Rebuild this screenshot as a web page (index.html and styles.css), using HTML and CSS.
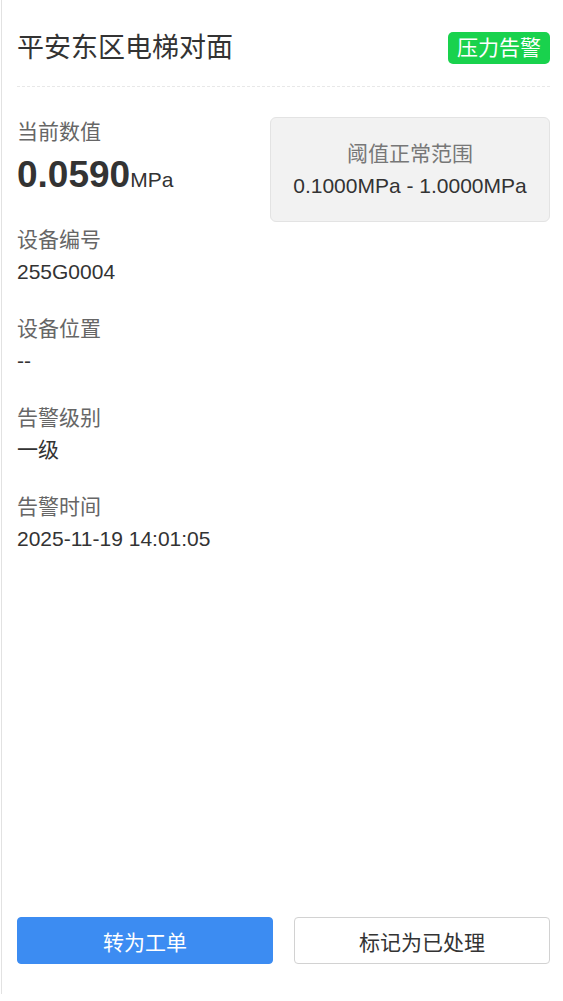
FILE: index.html
```html
<!DOCTYPE html>
<html lang="zh-CN">
<head>
<meta charset="utf-8">
<title>压力告警</title>
<link rel="stylesheet" href="styles.css">
</head>
<body>
<div class="panel">
  <div class="header">
    <h1 class="title">平安东区电梯对面</h1>
    <span class="badge">压力告警</span>
  </div>
  <div class="top-row">
    <div class="group">
      <div class="label">当前数值</div>
      <div class="big-value">0.0590<span class="unit">MPa</span></div>
    </div>
    <div class="range-box">
      <div class="range-label">阈值正常范围</div>
      <div class="range-value">0.1000MPa - 1.0000MPa</div>
    </div>
  </div>
  <div class="info-list">
    <div class="group">
      <div class="label">设备编号</div>
      <div class="value">255G0004</div>
    </div>
    <div class="group">
      <div class="label">设备位置</div>
      <div class="value">--</div>
    </div>
    <div class="group">
      <div class="label">告警级别</div>
      <div class="value">一级</div>
    </div>
    <div class="group">
      <div class="label">告警时间</div>
      <div class="value">2025-11-19 14:01:05</div>
    </div>
  </div>
  <div class="footer">
    <button class="btn btn-primary">转为工单</button>
    <button class="btn btn-default">标记为已处理</button>
  </div>
</div>
</body>
</html>
```

FILE: styles.css
```css
* { box-sizing: border-box; }
html, body {
  margin: 0;
  padding: 0;
  background: #fff;
}
body {
  font-family: "Liberation Sans", "Noto Sans CJK SC", sans-serif;
  color: #333;
  font-size: 21px;
  line-height: 1.5;
}
.panel {
  margin-left: 1px;
  border-left: 1px solid #e2e2e2;
  height: 994px;
  padding: 0 13px 30px 15px;
  display: flex;
  flex-direction: column;
}
.header {
  display: flex;
  align-items: center;
  justify-content: space-between;
  padding: 28px 0 18px;
  border-bottom: 1px dashed #e8e8e8;
}
.title {
  margin: 0;
  font-size: 27px;
  font-weight: normal;
  line-height: 40px;
  color: #333;
}
.badge {
  background: #19d24d;
  color: #fff;
  font-size: 21px;
  line-height: 32px;
  padding: 0 9px;
  border-radius: 5px;
}
.top-row {
  display: flex;
  align-items: flex-start;
  justify-content: space-between;
  margin-top: 29px;
}
.label {
  color: #666;
}
.value {
  color: #333;
}
.big-value {
  font-size: 37px;
  font-weight: bold;
  line-height: 54px;
  color: #333;
}
.unit {
  font-size: 21px;
  font-weight: normal;
}
.range-box {
  width: 280px;
  height: 105px;
  margin-top: 1px;
  background: #f2f2f2;
  border: 1px solid #e3e3e3;
  border-radius: 6px;
  display: flex;
  flex-direction: column;
  align-items: center;
  justify-content: center;
}
.range-label {
  color: #777;
}
.range-value {
  color: #333;
}
.info-list {
  display: flex;
  flex-direction: column;
  gap: 26px;
  margin-top: 2px;
}
.footer {
  margin-top: auto;
  display: flex;
  gap: 21px;
}
.btn {
  flex: 1;
  height: 47px;
  font-family: inherit;
  font-size: 21px;
  border-radius: 4px;
  cursor: pointer;
}
.btn-primary {
  background: #3c8cf2;
  border: 1px solid #3c8cf2;
  color: #fff;
}
.btn-default {
  background: #fff;
  border: 1px solid #d2d2d2;
  color: #333;
}
```
